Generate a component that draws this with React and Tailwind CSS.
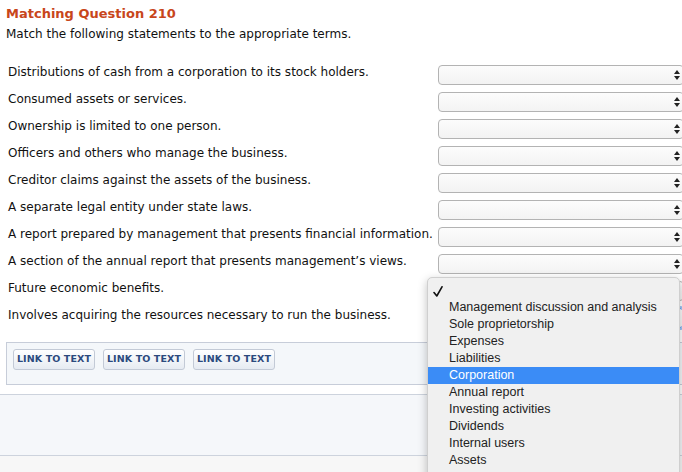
import React from 'react';

const statements = [
  'Distributions of cash from a corporation to its stock holders.',
  'Consumed assets or services.',
  'Ownership is limited to one person.',
  'Officers and others who manage the business.',
  'Creditor claims against the assets of the business.',
  'A separate legal entity under state laws.',
  'A report prepared by management that presents financial information.',
  'A section of the annual report that presents management’s views.',
  'Future economic benefits.',
  'Involves acquiring the resources necessary to run the business.',
];

const options = [
  'Management discussion and analysis',
  'Sole proprietorship',
  'Expenses',
  'Liabilities',
  'Corporation',
  'Annual report',
  'Investing activities',
  'Dividends',
  'Internal users',
  'Assets',
];

// little up/down arrow pair of a mac select
function Arrows() {
  return (
    <svg width="6" height="10" viewBox="0 0 6 10" className="absolute right-[3px] top-[4px]">
      <path d="M3 0 L6 4 L0 4 Z" fill="#222" />
      <path d="M3 10 L6 6 L0 6 Z" fill="#222" />
    </svg>
  );
}

function FakeSelect({ focused }) {
  return (
    <div
      className={`relative mt-[3px] h-[20px] w-[246px] shrink-0 rounded-[4px] border bg-gradient-to-b from-[#fcfcfc] to-[#f3f3f3] ${
        focused ? 'border-[#5b9bf0] shadow-[0_0_0_2px_#9cc3f5]' : 'border-[#b3b3b3]'
      }`}
    >
      <Arrows />
    </div>
  );
}

function LinkButton() {
  return (
    <button className="h-[21px] w-[82px] rounded-[3px] border border-[#c3cad6] bg-gradient-to-b from-white to-[#e6ebf2] text-[9.5px] font-bold tracking-[0.1px] text-[#2c4a7e]">
      LINK TO TEXT
    </button>
  );
}

export default function App() {
  return (
    <div className="relative h-[472px] w-[682px] overflow-hidden bg-white font-['DejaVu_Sans',Verdana,sans-serif] text-[#111]">
      <div className="px-[6px] pt-[6px]">
        <h1 className="text-[13px] font-bold leading-[16px] text-[#c8461b]">Matching Question 210</h1>
        <p className="mt-[4px] text-[12px] leading-[16px]">Match the following statements to the appropriate terms.</p>
      </div>

      {/* statements with their selects */}
      <div className="mt-[20px] flex flex-col">
        {statements.map((s, i) => (
          <div key={i} className="flex h-[27px] items-start">
            <div className="w-[438px] shrink-0 pl-[8px] pt-[2px] text-[12px] leading-[16px]">{s}</div>
            <FakeSelect focused={i === 9} />
          </div>
        ))}
      </div>

      <div className="ml-[6px] mt-[10px] flex h-[43px] w-[700px] items-start gap-[8px] border border-[#c7cdd9] bg-[#f4f7fa] pl-[6px] pt-[6px]">
        <LinkButton />
        <LinkButton />
        <LinkButton />
      </div>

      <div className="mt-[9px] h-[62px] border-y border-[#cdd3dd] bg-[#f5f7fa]" />
      <div className="h-[20px] bg-[#f7f7f7]" />

      {/* open dropdown menu */}
      <div className="absolute left-[427px] top-[277px] h-[205px] w-[253px] rounded-[5px] border border-[#cfcfcf] bg-[#f0f0f0] pt-[4px] font-['Liberation_Sans',Arial,sans-serif] text-[12.5px] text-[#222] shadow-[0_3px_10px_rgba(0,0,0,0.25)]">
        <div className="relative h-[17px]">
          <svg width="10" height="11" viewBox="0 0 10 11" className="absolute left-[5px] top-[4px]">
            <path d="M1 6.5 L3.8 10 L9 0.8" fill="none" stroke="#111" strokeWidth="1.6" strokeLinecap="round" strokeLinejoin="round" />
          </svg>
        </div>
        {options.map((o) => (
          <div
            key={o}
            className={`h-[17px] pl-[21px] leading-[17px] ${o === 'Corporation' ? 'bg-[#3b8cf6] text-white' : ''}`}
          >
            {o}
          </div>
        ))}
      </div>
    </div>
  );
}
